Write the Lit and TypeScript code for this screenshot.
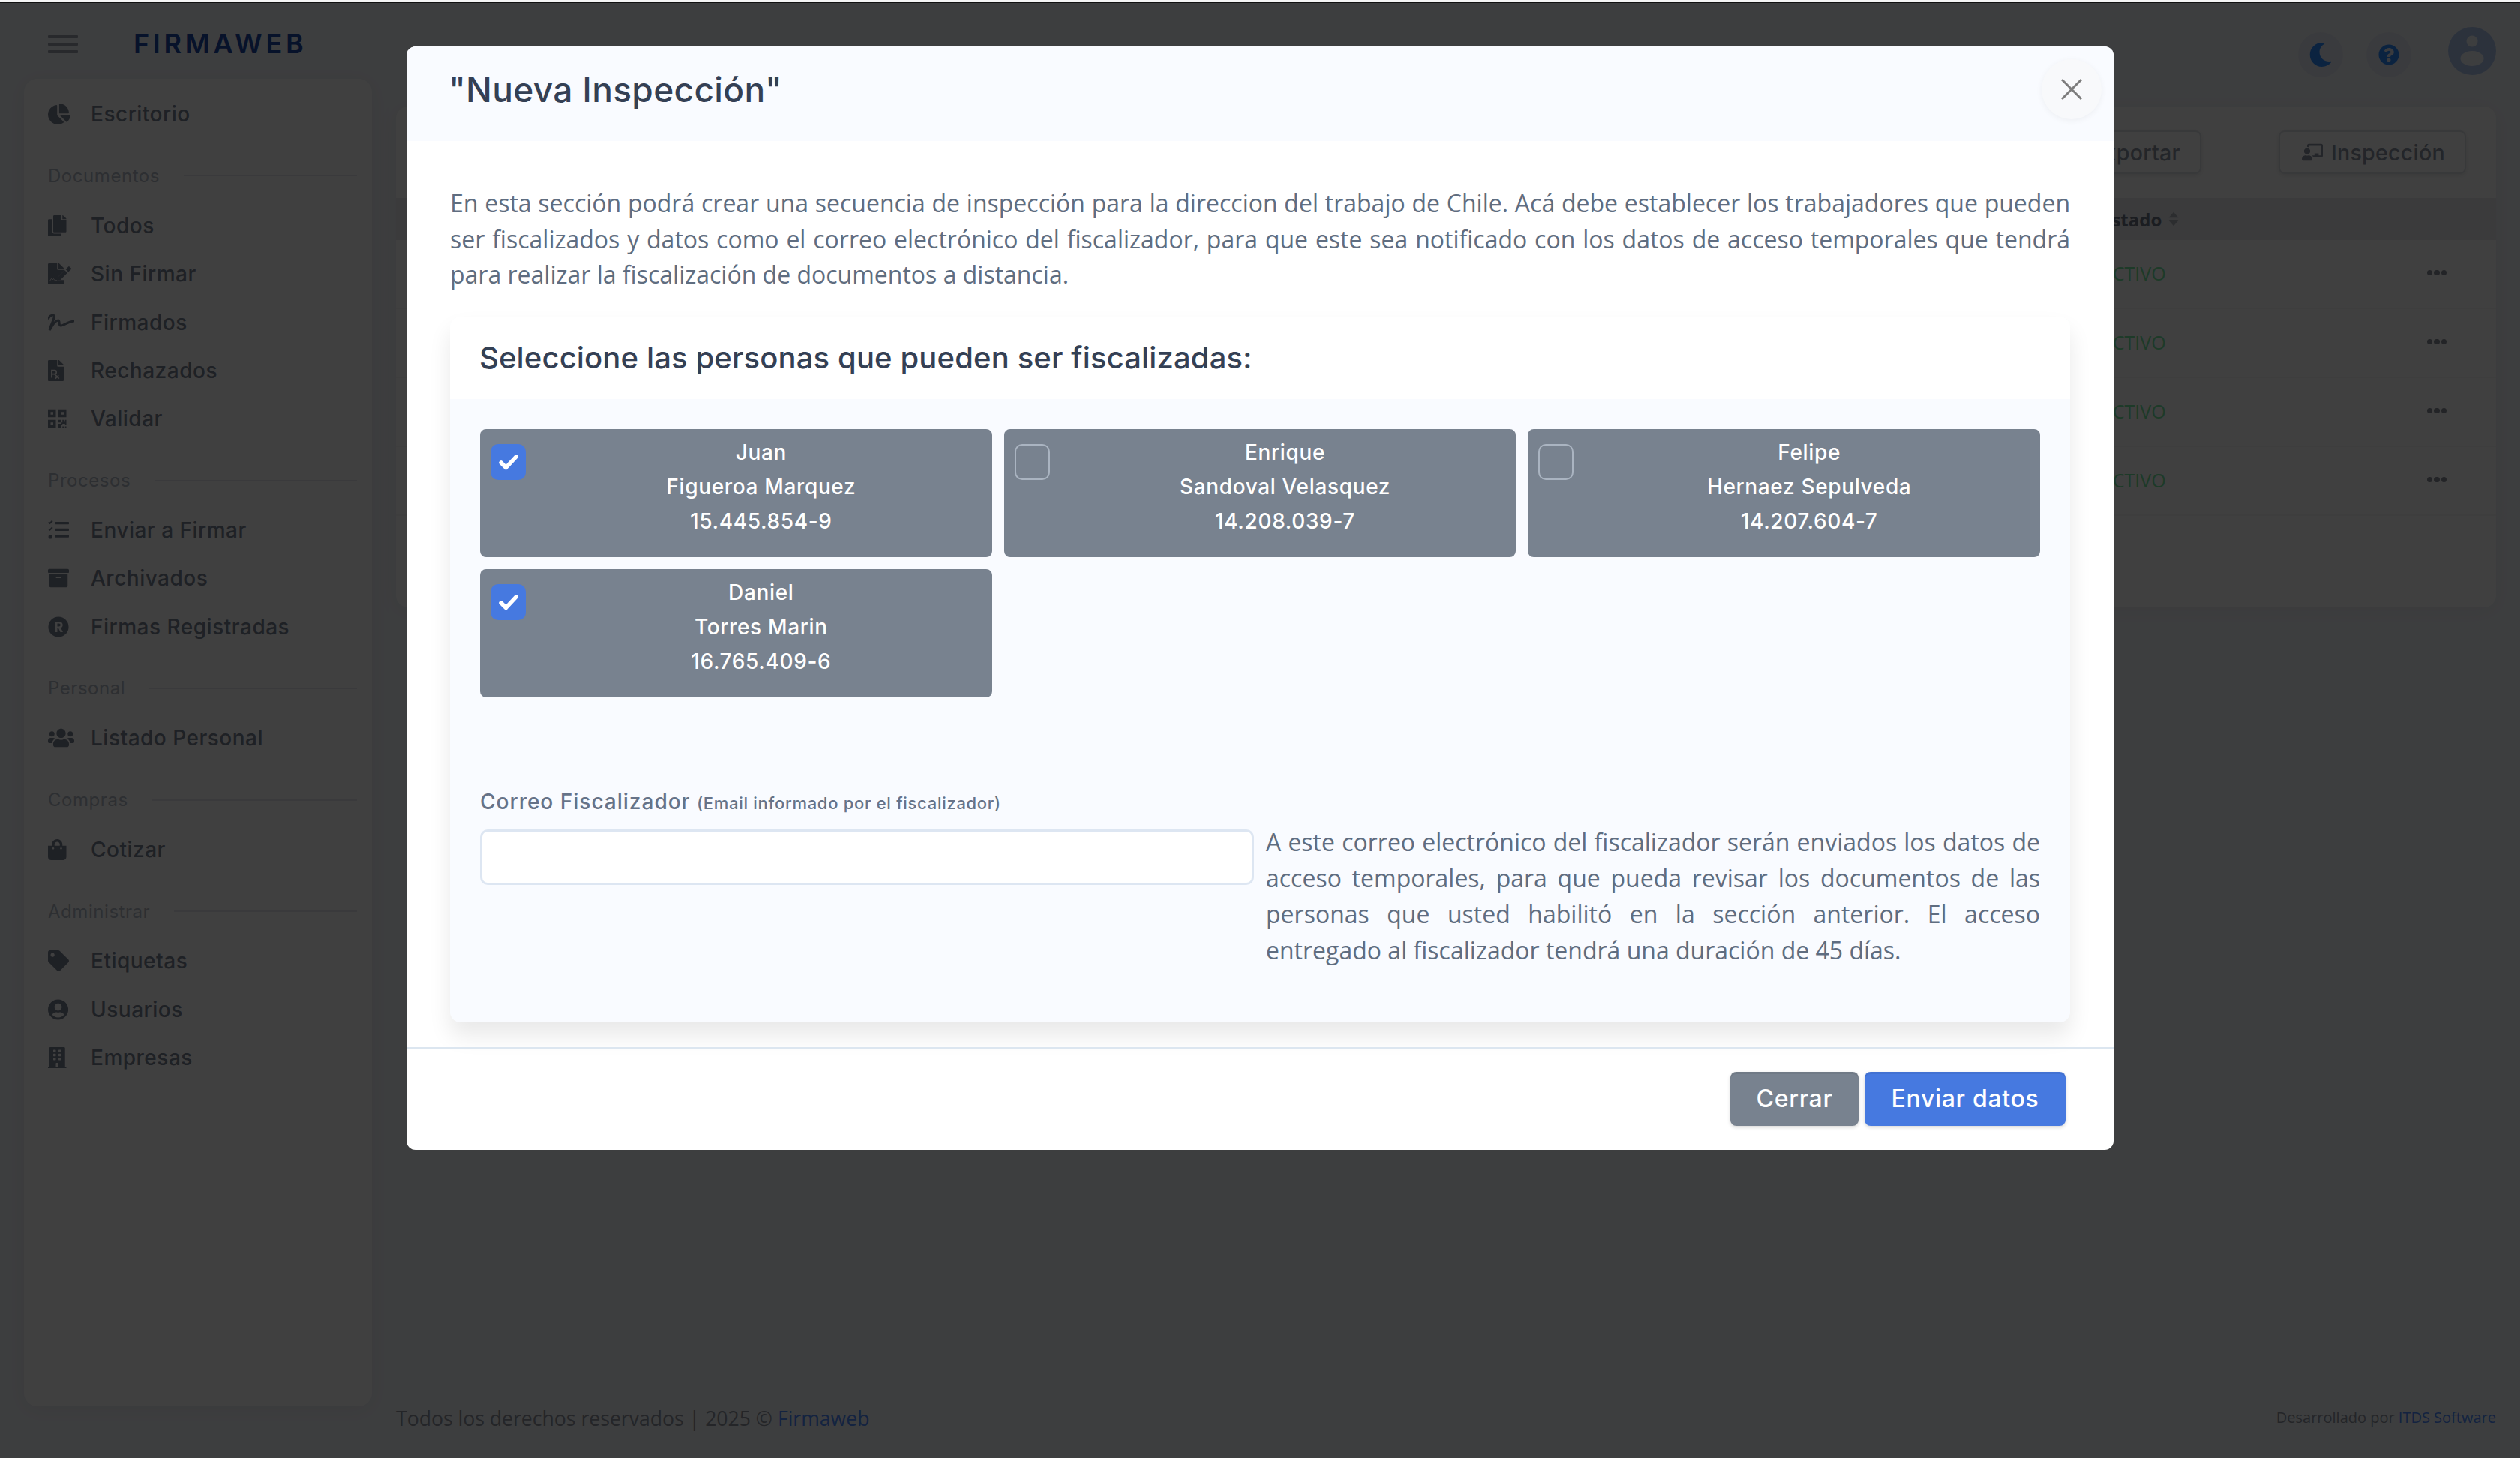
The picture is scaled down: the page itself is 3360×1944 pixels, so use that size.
import { LitElement, html, css, svg } from "lit";
import { customElement } from "lit/decorators.js";

const P = (vb: string, inner: unknown) => html`<svg viewBox=${vb} fill="currentColor" xmlns="http://www.w3.org/2000/svg">${inner}</svg>`;

const icons: Record<string, unknown> = {
  pie: P("0 0 544 512", svg`<path d="M527.79 288H290.5l158.03 158.03c6.04 6.04 15.98 6.53 22.19.68 38.7-36.46 65.32-85.61 73.13-140.86 1.34-9.46-6.51-17.85-16.06-17.85zm-15.83-64.8C503.72 103.74 408.26 8.28 288.8.04 279.68-.59 272 7.1 272 16.24V240h223.77c9.14 0 16.82-7.68 16.19-16.8zM224 288V50.71c0-9.55-8.39-17.4-17.84-16.06C86.99 51.49-4.1 155.6.14 280.37 4.5 408.51 114.83 513.59 243.03 511.98c50.4-.63 96.97-16.87 135.26-44.03 7.9-5.6 8.42-17.23 1.57-24.08L224 288z"/>`),
  copy: P("0 0 448 512", svg`<path d="M320 448v40c0 13.255-10.745 24-24 24H24c-13.255 0-24-10.745-24-24V120c0-13.255 10.745-24 24-24h72v296c0 30.879 25.121 56 56 56h168zm0-344V0H152c-13.255 0-24 10.745-24 24v368c0 13.255 10.745 24 24 24h272c13.255 0 24-10.745 24-24V128H344c-13.2 0-24-10.8-24-24zm120.971-31.029L375.029 7.029A24 24 0 0 0 358.059 0H352v96h96v-6.059a24 24 0 0 0-7.029-16.97z"/>`),
  fileSign: P("0 0 576 512", svg`<path d="M0 24C0 11 11 0 24 0h200v136c0 13 11 24 24 24h136v30L256 318v90h128v80c0 13-11 24-24 24H24c-13 0-24-11-24-24z"/><path d="M256 0h6c6 0 12 3 17 7l98 98c4 5 7 11 7 17v6H256zM408 168l66 66-170 170h-66v-66zM496 80a20 20 0 0 1 28 0l40 40a20 20 0 0 1 0 28l-66 64-66-66z" /><path d="M50 420l40-60 24 40 24-26 26 40h60" fill="none" stroke="#fff" stroke-width="14"/>`),
  sig: P("0 0 640 512", svg`<path d="M10 150C60 60 170 40 150 130 130 220 60 330 40 440c60-110 150-240 210-240 50 0 0 130 60 130 60 0 170-90 320-110" fill="none" stroke="currentColor" stroke-width="56" stroke-linecap="round"/>`),
  rx: P("0 0 384 512", svg`<path d="M224 0H24C11 0 0 11 0 24v464c0 13 11 24 24 24h336c13 0 24-11 24-24V160H248c-13 0-24-11-24-24zM256 0v128h128v-6c0-6-3-12-7-17L279 7c-5-4-11-7-17-7z"/><path d="M90 430V250h70a45 45 0 0 1 0 90H90m70 0l110 110m-10-80l-80 80" fill="none" stroke="#fff" stroke-width="30"/>`),
  qr: P("0 0 448 512", svg`<path d="M0 224h192V32H0zm64-128h64v64H64zm192-64v192h192V32zm128 128h-64V96h64zM0 480h192V288H0zm64-128h64v64H64z"/><path d="M256 288h64v64h-64zM352 288h32v32h32v-32h32v128h-32v-32h-64v32h-32v-64h32zM352 448h32v32h-32zM416 448h32v32h-32zM256 384h64v96h-64z"/>`),
  tasks: P("0 0 512 512", svg`<path d="M16 60l30 30 62-62M16 220l30 30 62-62" fill="none" stroke="currentColor" stroke-width="36"/><circle cx="58" cy="420" r="48"/><rect x="176" y="56" width="336" height="56" rx="12"/><rect x="176" y="216" width="336" height="56" rx="12"/><rect x="176" y="376" width="336" height="56" rx="12"/>`),
  archive: P("0 0 512 512", svg`<path d="M32 448c0 18 14 32 32 32h384c18 0 32-14 32-32V160H32zm160-212c0-7 5-12 12-12h104c7 0 12 5 12 12v8c0 7-5 12-12 12H204c-7 0-12-5-12-12zM480 32H32C14 32 0 46 0 64v48c0 9 7 16 16 16h480c9 0 16-7 16-16V64c0-18-14-32-32-32z"/>`),
  reg: P("0 0 512 512", svg`<path fill-rule="evenodd" d="M256 8a248 248 0 1 0 0 496 248 248 0 0 0 0-496zM176 128h96c52 0 88 34 88 82 0 34-18 60-46 72l50 102h-62l-44-92h-30v92h-52zm52 46v72h38c24 0 40-14 40-36s-16-36-40-36z"/>`),
  users: P("0 0 640 512", svg`<path d="M96 224a64 64 0 1 0 0-128 64 64 0 0 0 0 128zm448 0a64 64 0 1 0 0-128 64 64 0 0 0 0 128zm32 32h-64c-17.6 0-33.5 7.1-45.1 18.6 40.3 22.1 68.9 62 75.1 109.4h66c17.7 0 32-14.3 32-32v-32c0-35.3-28.7-64-64-64zm-256 0c61.9 0 112-50.1 112-112S381.900 32 320 32 208 82.100 208 144s50.100 112 112 112zm76.800 32h-8.300c-20.800 10-43.900 16-68.500 16s-47.600-6-68.500-16h-8.300C179.600 288 128 339.600 128 403.200V432c0 26.500 21.500 48 48 48h288c26.500 0 48-21.500 48-48v-28.800c0-63.600-51.600-115.200-115.200-115.200zm-223.700-13.400C161.500 263.100 145.600 256 128 256H64c-35.300 0-64 28.700-64 64v32c0 17.700 14.300 32 32 32h65.900c6.300-47.400 34.900-87.300 75.200-109.400z"/>`),
  bag: P("0 0 448 512", svg`<path d="M352 160v-32C352 57.420 294.579 0 224 0 153.420 0 96 57.420 96 128v32H0v272c0 44.183 35.817 80 80 80h288c44.183 0 80-35.817 80-80V160h-96zm-192-32c0-35.290 28.710-64 64-64s64 28.710 64 64v32H160v-32zm160 120c-13.255 0-24-10.745-24-24s10.745-24 24-24 24 10.745 24 24-10.745 24-24 24zm-192 0c-13.255 0-24-10.745-24-24s10.745-24 24-24 24 10.745 24 24-10.745 24-24 24z"/>`),
  tag: P("0 0 512 512", svg`<path d="M0 252.118V48C0 21.490 21.490 0 48 0h204.118a48 48 0 0 1 33.941 14.059l211.882 211.882c18.745 18.745 18.745 49.137 0 67.882L293.823 497.941c-18.745 18.745-49.137 18.745-67.882 0L14.059 286.059A48 48 0 0 1 0 252.118zM112 64c-26.510 0-48 21.490-48 48s21.490 48 48 48 48-21.490 48-48-21.490-48-48-48z"/>`),
  user: P("0 0 496 512", svg`<path d="M248 8C111 8 0 119 0 256s111 248 248 248 248-111 248-248S385 8 248 8zm0 96c48.600 0 88 39.400 88 88s-39.400 88-88 88-88-39.400-88-88 39.400-88 88-88zm0 344c-58.700 0-111.300-26.600-146.500-68.200 18.800-35.400 55.600-59.800 98.500-59.800 2.400 0 4.800.4 7.100 1.100 13 4.200 26.600 6.900 40.900 6.900 14.300 0 28-2.700 40.900-6.900 2.300-.7 4.700-1.100 7.100-1.100 42.900 0 79.700 24.400 98.500 59.800C359.300 421.400 306.700 448 248 448z"/>`),
  building: P("0 0 448 512", svg`<path fill-rule="evenodd" d="M436 480h-20V24c0-13-11-24-24-24H56C43 0 32 11 32 24v456H12c-7 0-12 5-12 12v20h448v-20c0-7-5-12-12-12zM128 76c0-7 5-12 12-12h40c7 0 12 5 12 12v40c0 7-5 12-12 12h-40c-7 0-12-5-12-12zm0 96c0-7 5-12 12-12h40c7 0 12 5 12 12v40c0 7-5 12-12 12h-40c-7 0-12-5-12-12zm52 148h-40c-7 0-12-5-12-12v-40c0-7 5-12 12-12h40c7 0 12 5 12 12v40c0 7-5 12-12 12zm76 160h-64v-84c0-7 5-12 12-12h40c7 0 12 5 12 12zm64-172c0 7-5 12-12 12h-40c-7 0-12-5-12-12v-40c0-7 5-12 12-12h40c7 0 12 5 12 12zm0-96c0 7-5 12-12 12h-40c-7 0-12-5-12-12v-40c0-7 5-12 12-12h40c7 0 12 5 12 12zm0-96c0 7-5 12-12 12h-40c-7 0-12-5-12-12V76c0-7 5-12 12-12h40c7 0 12 5 12 12z"/>`),
};

const nav = [
  { items: [["pie", "Escritorio"]] },
  { title: "Documentos", items: [["copy", "Todos"], ["fileSign", "Sin Firmar"], ["sig", "Firmados"], ["rx", "Rechazados"], ["qr", "Validar"]] },
  { title: "Procesos", items: [["tasks", "Enviar a Firmar"], ["archive", "Archivados"], ["reg", "Firmas Registradas"]] },
  { title: "Personal", items: [["users", "Listado Personal"]] },
  { title: "Compras", items: [["bag", "Cotizar"]] },
  { title: "Administrar", items: [["tag", "Etiquetas"], ["user", "Usuarios"], ["building", "Empresas"]] },
];

const people = [
  { n: "Juan", a: "Figueroa Marquez", r: "15.445.854-9", on: true },
  { n: "Enrique", a: "Sandoval Velasquez", r: "14.208.039-7", on: false },
  { n: "Felipe", a: "Hernaez Sepulveda", r: "14.207.604-7", on: false },
  { n: "Daniel", a: "Torres Marin", r: "16.765.409-6", on: true },
];

@customElement("app-root")
export class AppRoot extends LitElement {
  static styles = css`
    :host { display: block; position: relative; width: 3360px; height: 1944px; overflow: hidden; background: #f4f6fb; font-family: "Inter", "Liberation Sans", sans-serif; }
    .strip { height: 3px; background: #f4f4f4; border-bottom: 1px solid #111; position: relative; z-index: 5; }
    .shell { display: grid; grid-template-columns: 528px 1fr; height: 1940px; }
    .side { display: flex; flex-direction: column; }
    .brand { height: 101px; display: flex; align-items: flex-start; padding: 41px 0 0 64px; gap: 74px; box-sizing: border-box; }
    .burger { width: 40px; height: 24px; margin-top: 2px; display: flex; flex-direction: column; justify-content: space-between; }
    .burger i { display: block; height: 4px; background: #a0a4b0; border-radius: 1px; }
    .logo { font-size: 36px; line-height: 26px; font-weight: 600; letter-spacing: 4.7px; color: #1c48a8; }
    .navcard { margin-left: 32px; width: 464px; height: 1770px; background: #fff; border-radius: 18px; box-sizing: border-box; padding: 15px 20px 0 32px; box-shadow: 0 4px 30px rgba(0,0,0,.06); }
    .nh { display: flex; align-items: center; gap: 32px; height: 84.2px; padding: 34px 0 18px; box-sizing: border-box; font-size: 24px; font-weight: 400; letter-spacing: .55px; color: #b4bac6; }
    .nh::after { content: ""; flex: 1; height: 2px; background: #e6e8ee; }
    .ni { display: flex; align-items: center; height: 64.4px; font-size: 28px; font-weight: 500; letter-spacing: .5px; color: #7a8294; }
    .ic { width: 57px; height: 28px; flex: none; display: flex; align-items: center; }
    .ic svg { height: 28px; width: auto; display: block; }
    .main { display: flex; flex-direction: column; padding-right: 32px; }
    .top { height: 138px; display: flex; justify-content: flex-end; align-items: flex-start; box-sizing: border-box; padding-top: 39px; }
    .rb { width: 60px; height: 60px; border-radius: 50%; background: #e8ecf6; display: flex; align-items: center; justify-content: center; color: #2f8cff; margin-right: 31px; }
    .rb svg { width: 28px; height: 28px; }
    .rb svg.moon { width: 32px; height: 32px; }
    .rb.last { margin-right: 49px; }
    .avatar { width: 64px; height: 64px; border-radius: 50%; background: #b0c8f0; margin-top: -7px; color: #f4f6fb; overflow: hidden; }
    .avatar svg { width: 64px; height: 64px; display: block; }
    .content { height: 668px; background: #fff; border-radius: 16px; box-shadow: 0 4px 30px rgba(0,0,0,.05); overflow: hidden; }
    .tools { height: 122px; padding: 32px 40px 0 0; box-sizing: border-box; display: flex; justify-content: flex-end; gap: 103px; }
    .tb { height: 58px; box-sizing: border-box; padding: 0 26px 0 29px; display: flex; align-items: center; gap: 11px; font-size: 28.500px; font-weight: 500; letter-spacing: .3px; color: #8b93a3; border: 2px solid #e0e2e8; border-radius: 8px; background: #fff; box-shadow: 0 2px 6px rgba(0,0,0,.1); }
    .tb svg { width: 28px; height: 24px; }
    .thead { height: 56px; background: #e9eaee; display: grid; grid-template-columns: 2274px 1fr; align-items: center; }
    .th { grid-column: 2; display: flex; align-items: center; gap: 9px; font-family: "Open Sans", sans-serif; font-weight: 700; font-size: 24px; color: #6d7484; }
    .sort { width: 14px; height: 26px; color: #b0b4bc; }
    .row { height: 92px; border-bottom: 2px solid #f5f5f7; box-sizing: border-box; display: grid; grid-template-columns: 2273px 1fr auto; align-items: center; padding: 0 66px 3px 0; }
    .st { grid-column: 2; font-family: "Open Sans", sans-serif; font-size: 25px; color: #74e8a0; }
    .dots { display: flex; gap: 2px; }
    .dots i { width: 7.500px; height: 7.500px; border-radius: 50%; background: #8a8f9a; }
    .foot { margin-top: auto; display: flex; justify-content: space-between; align-items: flex-start; height: 71px; font-family: "Open Sans", sans-serif; color: #8f95a1; }
    .foot .l { font-size: 26.600px; }
    .foot .r { font-size: 20px; margin-top: 3px; }
    .foot b { font-weight: 400; color: #4e8aff; }

    .overlay { position: absolute; inset: 3px 0 0 0; background: rgba(0,0,0,.75); display: flex; justify-content: center; align-items: flex-start; padding-top: 59px; box-sizing: border-box; z-index: 4; }
    .modal { width: 2276px; height: 1471px; background: #fff; border-radius: 12px; display: flex; flex-direction: column; }
    .mh { height: 126px; flex: none; background: #f9fbff; border-radius: 12px 12px 0 0; display: flex; align-items: center; justify-content: space-between; box-sizing: border-box; padding: 0 16px 12px 58px; }
    .mt { margin: 0 0 0 -2px; font-size: 46px; font-weight: 500; color: #344054; letter-spacing: .35px; }
    .close { width: 80px; height: 80px; border-radius: 50%; background: #f8f9fb; box-shadow: 0 2px 8px rgba(0,0,0,.05); border: 0; padding: 0; display: flex; align-items: center; justify-content: center; color: #7d7d7d; }
    .close svg { width: 30px; height: 30px; }
    .mb { padding: 59px 58px 33px; flex: none; }
    .intro { margin: 0 0 32px; font-family: "Open Sans", sans-serif; font-size: 32px; line-height: 47.500px; color: #5f6d80; text-align: justify; }
    .card { border-radius: 14px; background: #f9fbff; box-shadow: 0 18px 30px rgba(0,0,0,.09); overflow: hidden; }
    .ch { height: 110px; background: #fff; display: flex; align-items: center; padding-left: 39px; font-size: 40px; font-weight: 500; color: #344054; letter-spacing: .13px; }
    .cb { padding: 40px 40px 72px; }
    .grid { display: grid; grid-template-columns: repeat(3, 1fr); gap: 16px; }
    .person { height: 171px; box-sizing: border-box; background: #78828f; border-radius: 8px; padding: 20px 0 0 14px; display: flex; color: #fff; }
    .cbx { width: 47px; height: 48px; box-sizing: border-box; border-radius: 10px; flex: none; border: 2px solid #aab4c1; display: flex; align-items: center; justify-content: center; }
    .cbx.on { background: #4679e0; border: 0; }
    .cbx svg { width: 28px; height: 22px; }
    .ptext { flex: 1; text-align: center; font-size: 28px; line-height: 46px; margin-top: -12px; padding-left: 6px; font-weight: 500; letter-spacing: .65px; }
    .lbl { margin-top: 120px; height: 38px; line-height: 38px; font-size: 28px; font-weight: 500; color: #667388; letter-spacing: 1px; }
    .lbl small { font-size: 22px; font-weight: 500; letter-spacing: .7px; }
    .form { margin-top: 11px; display: grid; grid-template-columns: 1032px 1fr; gap: 16px; align-items: start; }
    .input { display: block; width: 100%; margin-top: 7px; height: 74px; box-sizing: border-box; background: #fff; border: 3px solid #dde6f2; border-radius: 10px; outline: 0; }
    .help { margin: 0; font-family: "Open Sans", sans-serif; font-size: 32px; line-height: 48px; color: #5f6d80; text-align: justify; }
    .mf { border-top: 2px solid #dce6f0; height: 137px; box-sizing: border-box; padding: 31px 64px 0 0; display: flex; justify-content: flex-end; gap: 8px; }
    .btn { height: 72px; border: 0; border-radius: 8px; color: #fff; font: 500 32px "Inter", sans-serif; box-shadow: inset 0 3px 0 rgba(0,0,0,.06), 0 2px 5px rgba(0,0,0,.16); }
    .btn.g { width: 171px; background: #78828f; letter-spacing: .7px; }
    .btn.b { width: 268px; background: #4679e0; letter-spacing: .7px; }
  `;

  render() {
    return html`
      <div class="strip"></div>
      <div class="shell">
        <aside class="side">
          <div class="brand">
            <div class="burger"><i></i><i></i><i></i></div>
            <div class="logo">FIRMAWEB</div>
          </div>
          <nav class="navcard">
            ${nav.map((g) => html`
              ${g.title ? html`<div class="nh">${g.title}</div>` : ""}
              ${g.items.map(([i, t]) => html`<div class="ni"><span class="ic">${icons[i]}</span>${t}</div>`)}
            `)}
          </nav>
        </aside>
        <main class="main">
          <div class="top">
            <div class="rb"><svg class="moon" viewBox="0 0 512 512" fill="currentColor"><path d="M283.200 512c79 0 151.100-36 198.900-94.900 7.100-8.700-.6-21.400-11.600-19.300-124.200 23.700-238.300-71.600-238.300-197 0-72.300 38.700-138.700 101.500-174.500 9.700-5.500 7.300-20.200-3.700-22.200A258.200 258.200 0 0 0 283.200 0c-141.300 0-256 114.500-256 256 0 141.300 114.500 256 256 256z"/></svg></div>
            <div class="rb last"><svg viewBox="0 0 512 512" fill="currentColor"><path fill-rule="evenodd" d="M504 256c0 137-111 248-248 248S8 393 8 256 119 8 256 8s248 111 248 248zM262.700 90c-54.500 0-89.300 23-116.500 63.800-3.500 5.300-2.400 12.400 2.700 16.300l34.700 26.300c5.200 3.900 12.600 3 16.700-2.100 17.900-22.700 30.100-35.800 57.300-35.800 20.400 0 45.700 13.100 45.700 33 0 15-12.400 22.700-32.600 34-23.600 13.200-54.800 29.700-54.800 70.900V300c0 6.600 5.400 12 12 12h56c6.600 0 12-5.400 12-12v-1.300c0-28.600 83.500-29.800 83.500-107.200C379 133.100 318.400 90 262.700 90zM256 339.600c-25.500 0-46.200 20.700-46.200 46.200 0 25.500 20.700 46.200 46.200 46.200s46.200-20.700 46.200-46.200c0-25.500-20.700-46.200-46.200-46.200z"/></svg></div>
            <div class="avatar"><svg viewBox="0 0 64 64" fill="currentColor"><circle cx="32" cy="19" r="7.500"/><ellipse cx="32" cy="42" rx="15.500" ry="10"/></svg></div>
          </div>
          <section class="content">
            <div class="tools">
              <div class="tb">Exportar</div>
              <div class="tb"><svg viewBox="0 0 640 512" fill="currentColor"><path d="M208 352c-2.400 0-4.800.4-7.100 1.100C188 357.300 174.400 360 160 360c-14.400 0-28-2.700-40.900-6.900-2.300-.7-4.700-1.100-7.100-1.100C49.900 352-.3 402.500 0 464.600.1 490.800 21.700 512 48 512h224c26.300 0 47.900-21.200 48-47.400.3-62.100-49.900-112.600-112-112.600zM160 320c53 0 96-43 96-96s-43-96-96-96-96 43-96 96 43 96 96 96zM592 0H208c-26.500 0-48 22.300-48 49.600V96c23.400 0 45.100 6.800 64 17.800V64h352v288h-64v-64H384v64h-76.200c19.100 16.700 33.100 38.800 39.700 64H592c26.500 0 48-22.300 48-49.600V49.600C640 22.300 618.500 0 592 0z"/></svg>Inspección</div>
            </div>
            <div class="thead"><div class="th">Estado <svg class="sort" viewBox="0 0 14 28" fill="currentColor"><path d="M7 4l7 8H0zM7 24l-7-8h14z"/></svg></div></div>
            ${[0, 1, 2, 3].map(() => html`<div class="row"><span class="st">ACTIVO</span><span class="dots"><i></i><i></i><i></i></span></div>`)}
          </section>
          <footer class="foot">
            <span class="l">Todos los derechos reservados | 2025 © <b>Firmaweb</b></span>
            <span class="r">Desarrollado por <b>ITDS Software</b></span>
          </footer>
        </main>
      </div>

      <div class="overlay">
        <div class="modal">
          <header class="mh">
            <h2 class="mt">"Nueva Inspección"</h2>
            <button class="close"><svg viewBox="0 0 30 30" fill="none" stroke="currentColor" stroke-width="3"><path d="M2 2l26 26M28 2L2 28"/></svg></button>
          </header>
          <div class="mb">
            <p class="intro">En esta sección podrá crear una secuencia de inspección para la direccion del trabajo de Chile. Acá debe establecer los trabajadores que pueden ser fiscalizados y datos como el correo electrónico del fiscalizador, para que este sea notificado con los datos de acceso temporales que tendrá para realizar la fiscalización de documentos a distancia.</p>
            <section class="card">
              <div class="ch">Seleccione las personas que pueden ser fiscalizadas:</div>
              <div class="cb">
                <div class="grid">
                  ${people.map((p) => html`
                    <div class="person">
                      <span class="cbx ${p.on ? "on" : ""}">${p.on ? html`<svg viewBox="0 0 28 22" fill="none" stroke="#fff" stroke-width="5.500" stroke-linecap="round" stroke-linejoin="round"><path d="M4 12l6.500 6.500L24 4"/></svg>` : ""}</span>
                      <div class="ptext">${p.n}<br />${p.a}<br />${p.r}</div>
                    </div>`)}
                </div>
                <div class="lbl">Correo Fiscalizador <small>(Email informado por el fiscalizador)</small></div>
                <div class="form">
                  <input class="input" />
                  <p class="help">A este correo electrónico del fiscalizador serán enviados los datos de acceso temporales, para que pueda revisar los documentos de las personas que usted habilitó en la sección anterior. El acceso entregado al fiscalizador tendrá una duración de 45 días.</p>
                </div>
              </div>
            </section>
          </div>
          <footer class="mf">
            <button class="btn g">Cerrar</button>
            <button class="btn b">Enviar datos</button>
          </footer>
        </div>
      </div>
    `;
  }
}
